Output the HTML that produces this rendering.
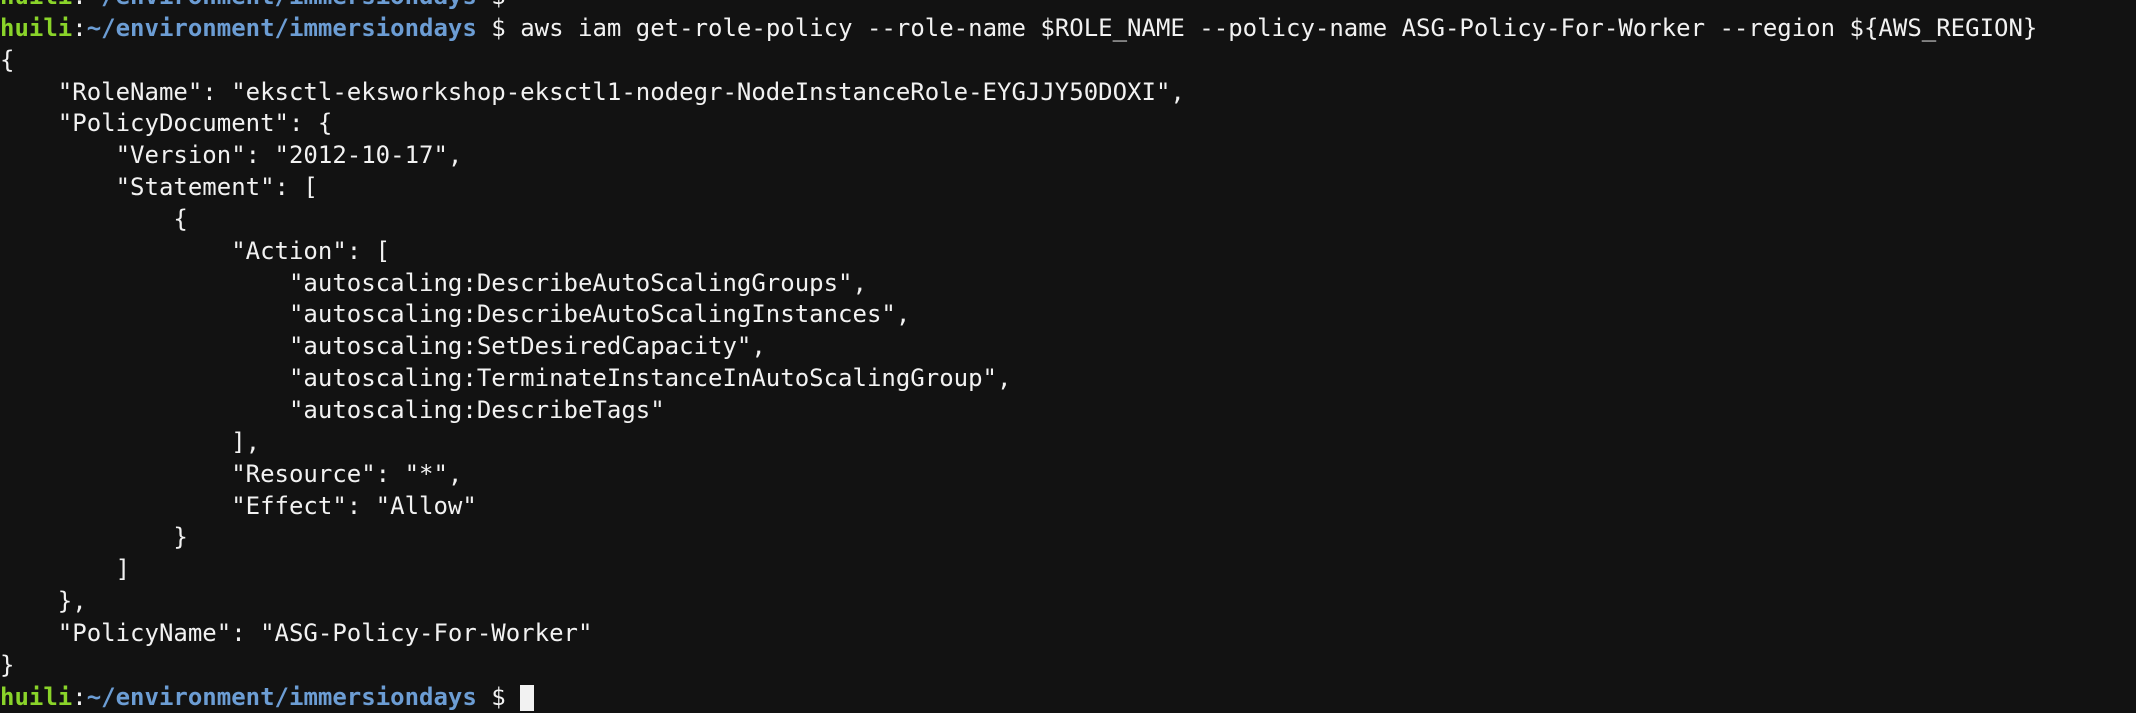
<!DOCTYPE html>
<html><head><meta charset="utf-8"><style>
html,body{margin:0;padding:0;background:#121212;width:2136px;height:692px;overflow:hidden}
pre{margin:0;position:absolute;left:0;top:-19px;font-family:"DejaVu Sans Mono","Liberation Mono",monospace;font-size:24px;line-height:31.85px;color:#f2f2f2;white-space:pre}
.g{color:#8ad42a;font-weight:bold}
.b{color:#6c9dd4;font-weight:bold}
.c{display:inline-block;width:14px;height:26px;background:#f2f2f2;vertical-align:-6px}
</style></head><body><pre><span class="g">huili</span>:<span class="b">~/environment/immersiondays</span> $
<span class="g">huili</span>:<span class="b">~/environment/immersiondays</span> $ aws iam get-role-policy --role-name $ROLE_NAME --policy-name ASG-Policy-For-Worker --region ${AWS_REGION}
{
    "RoleName": "eksctl-eksworkshop-eksctl1-nodegr-NodeInstanceRole-EYGJJY50DOXI",
    "PolicyDocument": {
        "Version": "2012-10-17",
        "Statement": [
            {
                "Action": [
                    "autoscaling:DescribeAutoScalingGroups",
                    "autoscaling:DescribeAutoScalingInstances",
                    "autoscaling:SetDesiredCapacity",
                    "autoscaling:TerminateInstanceInAutoScalingGroup",
                    "autoscaling:DescribeTags"
                ],
                "Resource": "*",
                "Effect": "Allow"
            }
        ]
    },
    "PolicyName": "ASG-Policy-For-Worker"
}
<span class="g">huili</span>:<span class="b">~/environment/immersiondays</span> $ <span class="c"></span></pre></body></html>
